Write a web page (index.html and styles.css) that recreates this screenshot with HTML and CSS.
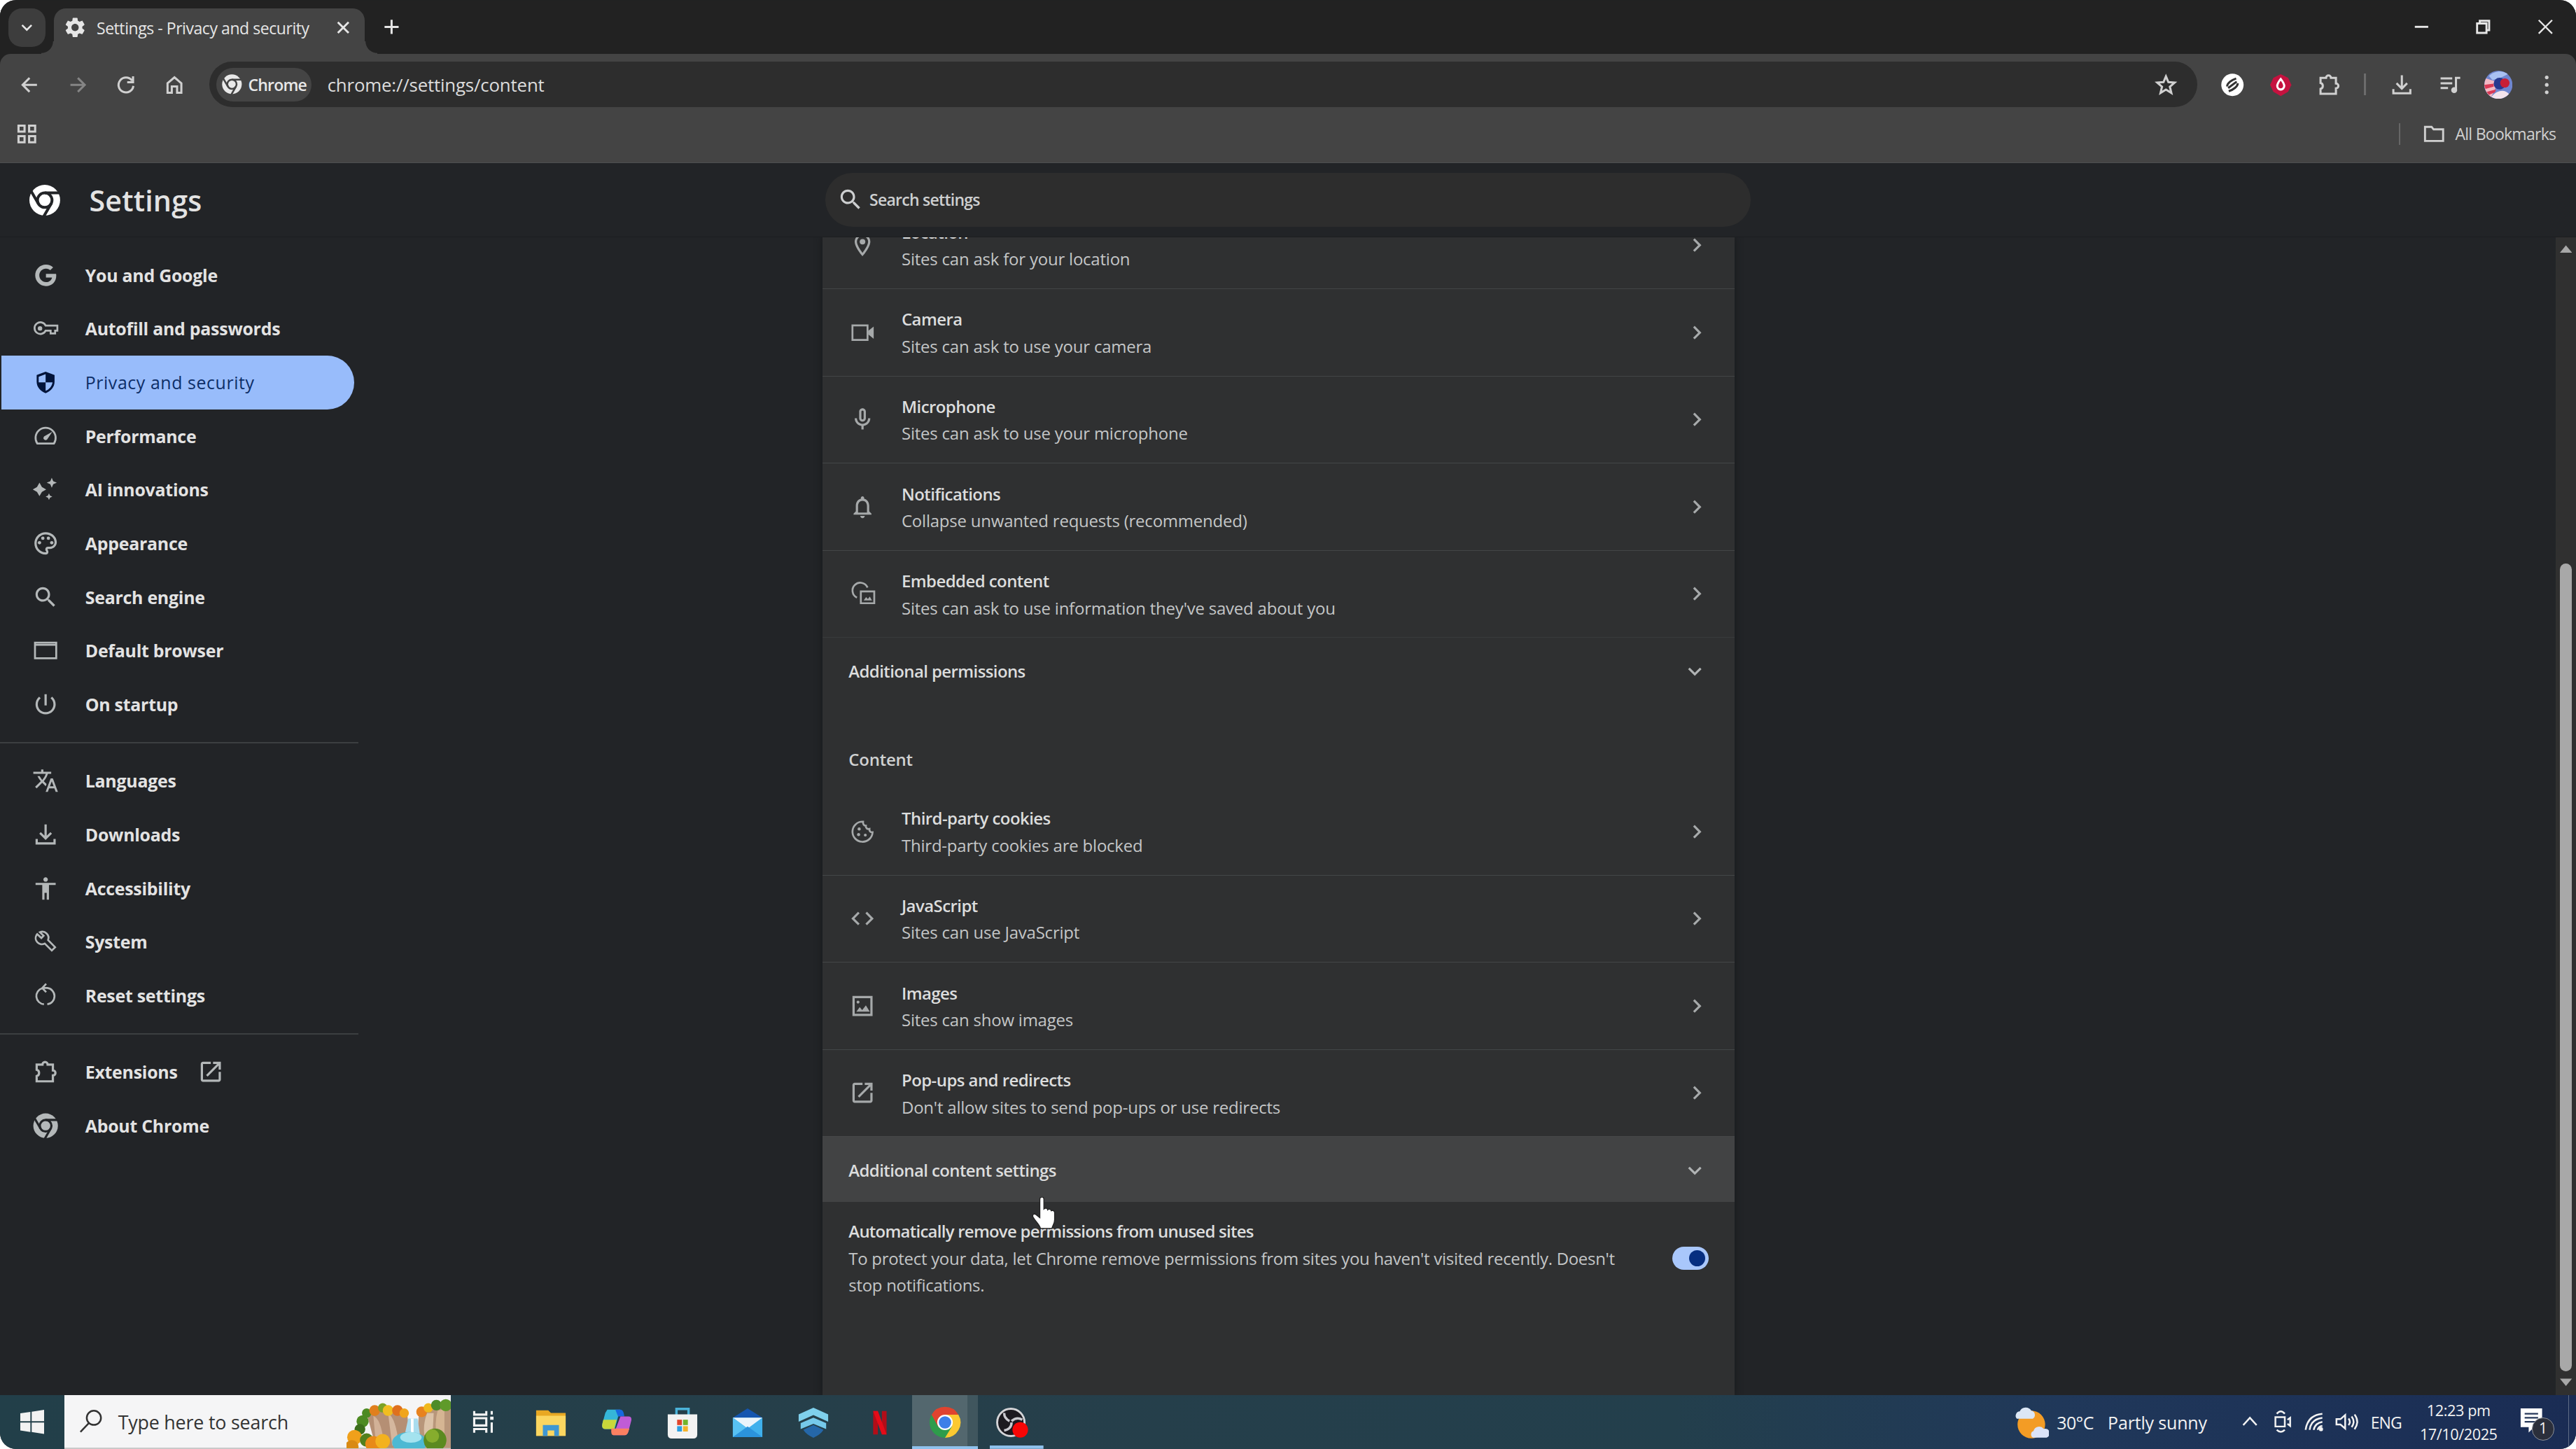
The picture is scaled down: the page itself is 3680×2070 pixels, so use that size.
FILE: index.html
```html
<!DOCTYPE html>
<html lang="en">
<head>
<meta charset="utf-8">
<title>Settings - Privacy and security</title>
<link rel="stylesheet" href="styles.css">
</head>
<body>
<!-- shared icon shapes -->
<svg class="sprite">
	<symbol id="right" viewBox="0 0 24 24"><path d="M10 6L8.590 7.410 13.170 12l-4.580 4.590L10 18l6-6z"/></symbol>
	<symbol id="down" viewBox="0 0 24 24"><path d="M16.590 8.590L12 13.170 7.410 8.590 6 10l6 6 6-6z"/></symbol>
	<symbol id="search" viewBox="0 0 24 24"><path d="M15.500 14h-.79l-.28-.27C15.410 12.590 16 11.110 16 9.500 16 5.910 13.090 3 9.500 3S3 5.910 3 9.500 5.910 16 9.500 16c1.610 0 3.090-.59 4.230-1.570l.27.28v.79l5 4.990L20.490 19l-4.990-5zm-6 0C7.010 14 5 11.990 5 9.500S7.010 5 9.500 5 14 7.010 14 9.500 11.990 14 9.500 14z"/></symbol>
	<symbol id="puzzle" viewBox="0 0 24 24"><path d="M4 5.500h5.200a2 2 0 0 1 4.600 0H18.500v5.200a2 2 0 0 1 0 4.600V20.500H4V15.800a2.900 2.900 0 0 0 0-5.600z" class="line"/></symbol>
	<symbol id="launch" viewBox="0 0 24 24"><path d="M19 19H5V5h7V3H5c-1.110 0-2 .9-2 2v14c0 1.100.89 2 2 2h14c1.100 0 2-.9 2-2v-7h-2v7zM14 3v2h3.590l-9.830 9.830 1.410 1.410L19 6.410V10h2V3h-7z"/></symbol>
	<symbol id="download" viewBox="0 0 24 24"><path d="M12 3v12M7 10.500l5 5 5-5M4 16v4h16v-4" class="line"/></symbol>
	<symbol id="chrome" viewBox="0 0 24 24"><circle cx="12" cy="12" r="11"/><g class="cut"><circle cx="12" cy="12" r="5.200"/><path d="M12 6.800h10.500M16.500 14.600L11.300 23.600M7.500 14.600L2.300 5.600"/></g></symbol>
	<symbol id="image" viewBox="0 0 24 24"><path d="M4 4h16v16H4z" class="line"/><path d="M6.500 17l3-4 2.200 2.600L15 11.500l3.500 5.500z"/><circle cx="8" cy="8.500" r="1.300"/></symbol>
</svg>

<div class="window">
	<div class="tabstrip">
		<div class="tabsearch"><svg class="i16"><use href="#down"/></svg></div>
		<div class="tab">
			<svg class="i18" viewBox="0 0 24 24"><path d="M19.140 12.940c.04-.3.06-.61.06-.94 0-.32-.02-.64-.07-.94l2.030-1.580c.18-.14.23-.41.12-.61l-1.920-3.320c-.12-.22-.37-.29-.59-.22l-2.390.96c-.5-.38-1.030-.7-1.620-.94l-.36-2.540c-.04-.24-.24-.41-.48-.41h-3.840c-.24 0-.43.17-.47.41l-.36 2.540c-.59.24-1.130.57-1.620.94l-2.390-.96c-.22-.08-.47 0-.59.22L2.740 8.870c-.12.21-.08.47.12.61l2.030 1.580c-.05.3-.09.63-.09.94s.02.64.07.94l-2.030 1.580c-.18.14-.23.41-.12.61l1.920 3.320c.12.22.37.29.59.22l2.390-.96c.5.38 1.030.7 1.620.94l.36 2.540c.05.24.24.41.48.41h3.840c.24 0 .44-.17.47-.41l.36-2.540c.59-.24 1.130-.56 1.620-.94l2.390.96c.22.08.47 0 .59-.22l1.920-3.320c.12-.22.07-.47-.12-.61l-2.010-1.580zM12 15.600c-1.980 0-3.600-1.620-3.600-3.600s1.620-3.600 3.600-3.600 3.600 1.620 3.600 3.600-1.620 3.600-3.600 3.600z"/></svg>
			<span class="tabtitle">Settings - Privacy and security</span>
			<svg class="i16" viewBox="0 0 16 16"><path d="M4 4l8 8M12 4l-8 8" class="line"/></svg>
		</div>
		<svg class="newtab" viewBox="0 0 16 16"><path d="M8 2v12M2 8h12" class="line"/></svg>
		<div class="winbtns">
			<svg viewBox="0 0 16 16"><path d="M3 8h10" class="line"/></svg>
			<svg viewBox="0 0 16 16"><path d="M3.500 5.500h7v7h-7zM5.500 5.500v-2h7v7h-2" class="line"/></svg>
			<svg viewBox="0 0 16 16"><path d="M3 3l10 10M13 3L3 13" class="line thin"/></svg>
		</div>
	</div>

	<div class="chromebar">
		<div class="toolbar">
			<span class="btn"><svg viewBox="0 0 24 24"><path d="M19 12H6M12 5.500L5.500 12l6.500 6.500" class="line"/></svg></span>
			<span class="btn off"><svg viewBox="0 0 24 24"><path d="M5 12h13M12 5.500l6.500 6.500-6.500 6.500" class="line"/></svg></span>
			<span class="btn"><svg viewBox="0 0 24 24"><path d="M17.500 8A7 7 0 1 0 18.800 13M18.500 4v5.500H13" class="line"/></svg></span>
			<span class="btn"><svg viewBox="0 0 24 24"><path d="M5.500 10.500L12 5l6.500 5.500v9H14.500v-6h-5v6h-4z" class="line"/></svg></span>
			<div class="omnibox">
				<div class="chip"><svg class="i16"><use href="#chrome"/></svg>Chrome</div>
				<span class="url">chrome://settings/content</span>
				<svg class="star" viewBox="0 0 24 24"><path d="M12 4l2.300 5.400 5.900.5-4.500 3.900 1.400 5.800-5.100-3.100-5.100 3.100 1.400-5.800-4.500-3.900 5.900-.5z" class="line"/></svg>
			</div>
			<span class="btn"><svg viewBox="0 0 24 24"><circle cx="12" cy="12" r="10.500" fill="#fff"/><path d="M7 13.500c0-3 4-6 8.500-7.500M17 10.500c0 3-4 6-8.500 7.500M8 15l8-6" stroke="#333" stroke-width="2" fill="none"/></svg></span>
			<span class="btn"><svg viewBox="0 0 24 24"><path d="M12 2l7 3.500 3 6.500-3 6.500-7 4-7-4L2 12l3-6.500z" fill="#c5123f"/><path d="M12 6.500c2 2.500 3.300 4.500 3.300 6.600a3.300 3.300 0 0 1-6.600 0c0-2.100 1.300-4.100 3.300-6.600z" fill="none" stroke="#fff" stroke-width="2"/></svg></span>
			<span class="btn"><svg><use href="#puzzle"/></svg></span>
			<span class="bar"></span>
			<span class="btn"><svg><use href="#download"/></svg></span>
			<span class="btn"><svg viewBox="0 0 24 24"><path d="M3 6h11M3 10.500h11M3 15h7M17.500 17V5.500h4" class="line"/><circle cx="15.800" cy="17" r="2.800"/></svg></span>
			<span class="btn"><svg class="avatar" viewBox="0 0 24 24"><circle cx="12" cy="12" r="12" fill="#6f86d0"/><path d="M1.500 6.500A12 12 0 0 0 6 22.400L10 14 9 9z" fill="#f2b9c4"/><path d="M0 12l8-1v2.500l-7 2zM2 18l8-2-1 2.500-5 2z" fill="#d93a55"/><path d="M4 4.500A12 12 0 0 1 20 3l-6 3-7 2z" fill="#a9c1f2"/><circle cx="13" cy="11" r="5" fill="#27398f"/><circle cx="17.500" cy="10.500" r="4" fill="#c81f36"/><path d="M6 22.400a12 12 0 0 0 15-2.500c-3-4-10-4-15 2.500z" fill="#f3e3ec"/></svg></span>
			<span class="btn"><svg viewBox="0 0 24 24"><circle cx="12" cy="5" r="1.700"/><circle cx="12" cy="12" r="1.700"/><circle cx="12" cy="19" r="1.700"/></svg></span>
		</div>
		<div class="bookmarks">
			<svg class="apps" viewBox="0 0 16 16"><path d="M1.800 1.800h4.500v4.500H1.800zM9.700 1.800h4.500v4.500H9.700zM1.800 9.700h4.500v4.500H1.800zM9.700 9.700h4.500v4.500H9.700z" class="line"/></svg>
			<span class="allbm"><svg class="i18" viewBox="0 0 24 24"><path d="M3 5h6.500l2 2.500H21V19H3z" class="line"/></svg>All Bookmarks</span>
		</div>
	</div>

	<div class="header">
		<svg class="logo"><use href="#chrome"/></svg>
		<h1>Settings</h1>
		<div class="searchbox"><svg class="i20"><use href="#search"/></svg>Search settings</div>
	</div>

	<div class="main">
		<ul class="nav">
			<li><svg viewBox="0 0 24 24"><path d="M12.240 10.285V14.400h6.806c-.275 1.765-2.056 5.174-6.806 5.174-4.095 0-7.439-3.389-7.439-7.574s3.345-7.574 7.439-7.574c2.330 0 3.891.989 4.785 1.849l3.254-3.138C18.189 1.186 15.479 0 12.240 0c-6.635 0-12 5.365-12 12s5.365 12 12 12c6.926 0 11.520-4.869 11.520-11.726 0-.788-.085-1.390-.189-1.989H12.240z" transform="translate(2.500 2.500) scale(.8)"/></svg>You and Google</li>
			<li><svg viewBox="0 0 24 24"><path d="M12 9.500h10.500v4.500h-2v2.500h-4V14H12a5.200 5.200 0 1 1 0-4.500z" class="line"/><circle cx="7" cy="12" r="2"/></svg>Autofill and passwords</li>
			<li class="on"><svg viewBox="0 0 24 24"><path d="M12 2.500L4 5.500v6c0 4.700 3.400 8.700 8 10.200 4.600-1.500 8-5.500 8-10.200v-6zM12 4.700V12h6.200c-.6 3.500-2.900 6.300-6.200 7.600V12H5.800V7z" fill-rule="evenodd"/></svg>Privacy and security</li>
			<li><svg viewBox="0 0 24 24"><path d="M4.500 18.500a9 9 0 1 1 15 0z" class="line"/><path d="M10.600 14.800a2 2 0 0 0 2.800 0L18 8l-7.400 4.200a2 2 0 0 0 0 2.600z"/></svg>Performance</li>
			<li><svg viewBox="0 0 24 24"><path d="M6.500 6l2.200 3.800L12.500 12l-3.800 2.200L6.500 18l-2.200-3.800L.5 12l3.800-2.200zM17.500 1.500l1.300 3.200L22 6l-3.200 1.300-1.300 3.200-1.300-3.200L13 6l3.200-1.300zM15 15.500l.9 2.100 2.100.9-2.100.9-.9 2.100-.9-2.100-2.100-.9 2.100-.9z"/></svg>AI innovations</li>
			<li><svg viewBox="0 0 24 24"><path d="M12 22C6.490 22 2 17.510 2 12S6.490 2 12 2s10 4.040 10 9c0 3.310-2.690 6-6 6h-1.770c-.28 0-.5.22-.5.5 0 .12.05.23.13.33.41.47.64 1.060.64 1.670A2.500 2.500 0 0 1 12 22zm0-18c-4.410 0-8 3.590-8 8s3.590 8 8 8c.28 0 .5-.22.5-.5a.54.54 0 0 0-.14-.35c-.41-.46-.63-1.050-.63-1.650a2.500 2.500 0 0 1 2.500-2.500H16c2.210 0 4-1.790 4-4 0-3.860-3.590-7-8-7z"/><circle cx="6.500" cy="11.500" r="1.500"/><circle cx="9.500" cy="7.500" r="1.500"/><circle cx="14.500" cy="7.500" r="1.500"/><circle cx="17.500" cy="11.500" r="1.500"/></svg>Appearance</li>
			<li><svg><use href="#search"/></svg>Search engine</li>
			<li><svg viewBox="0 0 24 24"><path d="M2.500 5h19v14h-19zM2.500 7h19" class="line"/></svg>Default browser</li>
			<li><svg viewBox="0 0 24 24"><path d="M13 3h-2v10h2V3zm4.830 2.170l-1.420 1.420C17.990 7.860 19 9.810 19 12c0 3.870-3.130 7-7 7s-7-3.130-7-7c0-2.190 1.010-4.140 2.580-5.420L6.170 5.170C4.230 6.820 3 9.260 3 12c0 4.970 4.030 9 9 9s9-4.030 9-9c0-2.740-1.230-5.180-3.170-6.830z"/></svg>On startup</li>
			<li class="sep"></li>
			<li><svg viewBox="0 0 24 24"><path d="M12.870 15.070l-2.540-2.510.03-.03c1.740-1.940 2.980-4.170 3.710-6.530H17V4h-7V2H8v2H1v1.990h11.170C11.500 7.920 10.440 9.750 9 11.350 8.070 10.320 7.300 9.190 6.690 8h-2c.73 1.630 1.730 3.170 2.980 4.560l-5.090 5.020L4 19l5-5 3.110 3.110.76-2.040zM18.500 10h-2L12 22h2l1.120-3h4.750L21 22h2l-4.500-12zm-2.620 7l1.620-4.330L19.120 17h-3.240z"/></svg>Languages</li>
			<li><svg><use href="#download"/></svg>Downloads</li>
			<li><svg viewBox="0 0 24 24"><path d="M12 2c1.100 0 2 .9 2 2s-.9 2-2 2-2-.9-2-2 .9-2 2-2zm9 7h-6v13h-2v-6h-2v6H9V9H3V7h18v2z"/></svg>Accessibility</li>
			<li><svg viewBox="0 0 24 24"><path d="M4.500 5.300l3.700 3.500 2-2L6.900 3.600a5.500 5.500 0 0 1 7.300 7l6.300 6.400-3 3-6.300-6.300A5.500 5.500 0 0 1 3.900 6z" class="line"/></svg>System</li>
			<li><svg viewBox="0 0 24 24"><path d="M9 5.500a7.300 7.300 0 0 0 1.500 14.300M13.500 19.800a7.300 7.300 0 0 0 0-14.500H10M12.500 1.500L9 5.300 12.500 9" class="line"/></svg>Reset settings</li>
			<li class="sep"></li>
			<li><svg><use href="#puzzle"/></svg>Extensions<svg class="ext"><use href="#launch"/></svg></li>
			<li><svg><use href="#chrome"/></svg>About Chrome</li>
		</ul>

		<div class="card">
			<div class="row first">
				<svg viewBox="0 0 24 24"><path d="M12 2C8.130 2 5 5.130 5 9c0 5.250 7 13 7 13s7-7.750 7-13c0-3.870-3.130-7-7-7zM7 9c0-2.760 2.240-5 5-5s5 2.240 5 5c0 2.880-2.880 7.190-5 9.880C9.920 16.210 7 11.850 7 9z"/><circle cx="12" cy="9" r="2.500"/></svg>
				<div class="txt"><b>Location</b>Sites can ask for your location</div><svg><use href="#right"/></svg>
			</div>
			<div class="row">
				<svg viewBox="0 0 24 24"><path d="M3 5.500h13.500v13H3z" class="line"/><path d="M17 10.500l5-4v11l-5-4z"/></svg>
				<div class="txt"><b>Camera</b>Sites can ask to use your camera</div><svg><use href="#right"/></svg>
			</div>
			<div class="row">
				<svg viewBox="0 0 24 24"><path d="M12 14c1.660 0 3-1.340 3-3V5c0-1.660-1.340-3-3-3S9 3.340 9 5v6c0 1.660 1.340 3 3 3zm-1-9c0-.55.45-1 1-1s1 .45 1 1v6c0 .55-.45 1-1 1s-1-.45-1-1V5zm6 6c0 2.760-2.240 5-5 5s-5-2.240-5-5H5c0 3.530 2.610 6.430 6 6.920V21h2v-3.080c3.390-.49 6-3.390 6-6.920h-2z"/></svg>
				<div class="txt"><b>Microphone</b>Sites can ask to use your microphone</div><svg><use href="#right"/></svg>
			</div>
			<div class="row">
				<svg viewBox="0 0 24 24"><path d="M12 22c1.100 0 2-.9 2-2h-4c0 1.100.9 2 2 2zm6-6v-5c0-3.070-1.630-5.640-4.500-6.320V4c0-.83-.67-1.500-1.500-1.500s-1.500.67-1.500 1.500v.68C7.640 5.360 6 7.920 6 11v5l-2 2v1h16v-1l-2-2zm-2 1H8v-6c0-2.480 1.510-4.500 4-4.500s4 2.020 4 4.500v6z"/></svg>
				<div class="txt"><b>Notifications</b>Collapse unwanted requests (recommended)</div><svg><use href="#right"/></svg>
			</div>
			<div class="row">
				<svg viewBox="0 0 24 24"><path d="M7 15.500A7 7 0 1 1 16.500 6.500M10.500 10h12v10.500h-12z" class="line"/><path d="M13 18l2.200-3 1.600 1.800 1.700-2.300 2 3.500z"/></svg>
				<div class="txt"><b>Embedded content</b>Sites can ask to use information they've saved about you</div><svg><use href="#right"/></svg>
			</div>
			<div class="more">Additional permissions<svg><use href="#down"/></svg></div>
			<h2>Content</h2>
			<div class="row">
				<svg viewBox="0 0 24 24"><path d="M12.500 3a9 9 0 1 0 8.500 9.500c-2 .2-3-1.200-2.800-3-2 .4-3.500-.8-3.200-2.800-1.800 0-2.800-1.500-2.500-3.700z" class="line"/><circle cx="9" cy="9.500" r="1.400"/><circle cx="8.500" cy="14.500" r="1.400"/><circle cx="14.500" cy="15" r="1.300"/></svg>
				<div class="txt"><b>Third-party cookies</b>Third-party cookies are blocked</div><svg><use href="#right"/></svg>
			</div>
			<div class="row">
				<svg viewBox="0 0 24 24"><path d="M9.400 16.600L4.800 12l4.600-4.600L8 6l-6 6 6 6 1.400-1.400zm5.200 0l4.600-4.600-4.600-4.600L16 6l6 6-6 6-1.400-1.400z"/></svg>
				<div class="txt"><b>JavaScript</b>Sites can use JavaScript</div><svg><use href="#right"/></svg>
			</div>
			<div class="row">
				<svg><use href="#image"/></svg>
				<div class="txt"><b>Images</b>Sites can show images</div><svg><use href="#right"/></svg>
			</div>
			<div class="row">
				<svg><use href="#launch"/></svg>
				<div class="txt"><b>Pop-ups and redirects</b>Don't allow sites to send pop-ups or use redirects</div><svg><use href="#right"/></svg>
			</div>
			<div class="more hover">Additional content settings<svg><use href="#down"/></svg></div>
			<div class="auto">
				<div class="txt"><b>Automatically remove permissions from unused sites</b>To protect your data, let Chrome remove permissions from sites you haven't visited recently. Doesn't stop notifications.</div>
				<span class="toggle"></span>
			</div>
		</div>

		<div class="scroll">
			<svg viewBox="0 0 10 6"><path d="M0 6l5-6 5 6z"/></svg>
			<div class="thumb"></div>
			<svg viewBox="0 0 10 6"><path d="M0 0l5 6 5-6z"/></svg>
		</div>
	</div>

	<div class="taskbar">
		<div class="start"><svg viewBox="0 0 18 18"><path d="M0 2.600L7.500 1.500v7H0zM8.500 1.400L18 0v8.500H8.500zM0 9.500h7.500v7L0 15.400zM8.500 9.500H18V18l-9.500-1.400z"/></svg></div>
		<div class="wsearch">
			<svg class="mag" viewBox="0 0 18 18"><circle cx="11" cy="6.500" r="5.300" class="line"/><path d="M7.200 10.500L1 17" class="line"/></svg>
			<span>Type here to search</span>
			<svg class="art" viewBox="0 0 78 40">
				<path d="M15 14q12-6 30-2l3 28H22z" fill="#b58f74"/><path d="M20 16q6 2 8 22h-6z" fill="#d2b197"/><path d="M31 14q6 4 8 24h-5z" fill="#d5b79e"/><path d="M54 14q10-6 24-4v30H52z" fill="#b8967a"/><path d="M60 14q-3 8-2 16l6 3 1-19z" fill="#dcc3a8"/><path d="M68 12q-3 10 0 24l5-2V11z" fill="#d5b593"/>
				<path d="M46 18h7l2 14H43z" fill="#a9dcee"/><path d="M49 18v14" stroke="#fff" stroke-width="2"/>
				<circle cx="12" cy="20" r="4.500" fill="#4d8a22"/><circle cx="10" cy="26" r="4" fill="#3c6e1c"/><circle cx="15" cy="14" r="3.500" fill="#4d8a22"/><circle cx="21" cy="12" r="4" fill="#e07f1d"/><circle cx="27" cy="10" r="3.500" fill="#7ba226"/><circle cx="31" cy="12" r="4" fill="#f1bd20"/><circle cx="38" cy="12" r="4" fill="#df701d"/><circle cx="43" cy="14" r="3.500" fill="#f0a51c"/>
				<circle cx="56" cy="13" r="4" fill="#e8821e"/><circle cx="61" cy="10" r="3.500" fill="#f0b91e"/><circle cx="67" cy="8" r="4" fill="#4e8c28"/><circle cx="74" cy="8" r="4.500" fill="#5f9a2a"/>
				<ellipse cx="47" cy="36" rx="13" ry="8" fill="#4db9d3"/><ellipse cx="48" cy="32" rx="8" ry="4" fill="#a4e3ef"/>
				<circle cx="66" cy="34" r="8.500" fill="#5b8a20"/><circle cx="64" cy="31" r="5" fill="#86ad2d"/>
				<circle cx="6" cy="32" r="5.500" fill="#f0a01b"/><circle cx="4" cy="39" r="5" fill="#d98a14"/><circle cx="15" cy="34" r="5" fill="#52801e"/><circle cx="20" cy="37" r="6" fill="#e88a18"/><circle cx="27" cy="35" r="5.500" fill="#f3b21f"/>
			</svg>
		</div>
		<div class="task"><svg viewBox="0 0 20 20" fill="none" stroke="#f4f4f4" stroke-width="1.800"><path d="M2 1v3h10V1M2 7h10v6H2zM2 19v-3h10v3M16.500 1v3M16.500 10.500V19" fill="none"/><path d="M15.200 7h2.800" stroke-width="2.600"/></svg></div>
		<div class="task"><svg viewBox="0 0 24 24"><path d="M1 3h9l2 2h11v17H1z" fill="#e8a823"/><path d="M1 7h22v15H1z" fill="#fbd660"/><path d="M6 22v-8h12v8h-3.500v-4h-5v4z" fill="#3f97d3"/></svg></div>
		<div class="task"><svg viewBox="0 0 24 24"><path d="M5 2.500h9.500l-4 14.500H3.500q-3 0-2.200-4L3.500 5z" fill="#35b6d8"/><path d="M2 10h10l-2 7H3.500q-3 0-2.200-4z" fill="#c9d83a"/><path d="M11 2.500h3.500q2.300 0 2.800 3l.4 2H13z" fill="#1868e0"/><path d="M9.500 21.500H18q2 0 2.800-3l2-7.500q.8-3.500-2-3.500h-6z" fill="#c05cd6"/><path d="M8 16.500h13.400l-.6 2Q20 21.500 18 21.500H9.500q-2 0-1.500-5z" fill="#fb8061"/></svg></div>
		<div class="task"><svg viewBox="0 0 24 24"><path d="M7.500 7V2h9v5" fill="none" stroke="#4bb3d9" stroke-width="1.800"/><path d="M1 6h22v15q0 3-3 3H4q-3 0-3-3z" fill="#f3f3f3"/><path d="M8 10h3.600v4H8z" fill="#e0452b"/><path d="M12.400 10H16v4h-3.600z" fill="#73b42b"/><path d="M8 14.800h3.600v4H8z" fill="#2c9fe0"/><path d="M12.400 14.800H16v4h-3.600z" fill="#f5b32a"/></svg></div>
		<div class="task"><svg viewBox="0 0 24 24"><path d="M1 8.500l11-7 11 7z" fill="#1456b0"/><path d="M1 8.500h22V23H1z" fill="#3fb0ec"/><path d="M1 8.500h22l-11 8z" fill="#eaf4fb"/><path d="M1 8.500l11 8L1 23z" fill="#58c1f3"/><path d="M1 23l11-8 11 8z" fill="#2b93dc"/></svg></div>
		<div class="task"><svg viewBox="0 0 24 24"><path d="M12 1l11 5v5.500l-11-5-11 5V6z" fill="#7fd0ec"/><path d="M12 8.500l9.500 4v4.500l-9.500-4-9.500 4v-4.500z" fill="#76c9ea"/><path d="M4.500 17.500l7.500-3.500 7.500 3.500q-2 3.500-7.500 6-5.500-2.500-7.500-6z" fill="#2567a8"/></svg></div>
		<div class="task"><svg viewBox="0 0 24 24"><path d="M7.500 3.500H11V21H7.500zM14 3.500h3.500V21H14z" fill="#b30d18"/><path d="M7.500 3.500H11L17.500 21H14z" fill="#e50b18"/></svg></div>
		<div class="task active"><svg viewBox="0 0 24 24"><circle cx="12" cy="12" r="11.500" fill="#2e9c4b"/><path d="M2 6.200A11.500 11.500 0 0 1 22 6.200H12L6.800 15z" fill="#e0432f"/><path d="M22 6.200a11.500 11.500 0 0 1-10 17.300L17.200 15 12 6.200z" fill="#fcc931"/><circle cx="12" cy="12" r="5.800" fill="#fff"/><circle cx="12" cy="12" r="4.600" fill="#3d7fe8"/></svg></div>
		<div class="task run"><svg viewBox="0 0 24 24"><circle cx="11" cy="12" r="10.200" fill="#1c1a20" stroke="#d5d5d8" stroke-width="1.500"/><path d="M10 11q-4-2-4-6M11.500 12q0 5-5.500 6M11.500 11q4-3.500 8-1" stroke="#c9c9cf" stroke-width="1.800" fill="none"/><circle cx="18" cy="17.500" r="5.800" fill="#f80606"/></svg></div>

		<div class="tray">
			<svg class="weather" viewBox="0 0 24 24"><circle cx="12" cy="13.500" r="9.500" fill="#f39c25"/><path d="M2 9.500a3 3 0 0 1 2-5 4.500 4.500 0 0 1 8-.5 3 3 0 0 1 1 5.500z" fill="#dce7f5"/><path d="M13 22.500a2.500 2.500 0 0 1 .5-4.500 4 4 0 0 1 7-1.500 3 3 0 0 1 2 6z" fill="#dbe3f7"/></svg>
			<span class="temp">30°C</span><span class="cond">Partly sunny</span>
			<svg viewBox="0 0 20 20"><path d="M5 12.500l5-5.500 5 5.500" class="line"/></svg>
			<svg viewBox="0 0 20 20"><path d="M5 6.500h7v7H5zM14 8.500l2-1.500v6l-2-1.500M6 4q3-3.500 6 0M6 16q3 3 6 0" class="line"/></svg>
			<svg viewBox="0 0 20 20"><path d="M3.500 16Q5 5 16 4M6.500 16q1-8 9.500-9M9.500 16q1-5 6.500-6M12.500 16q.5-2.500 3.500-3" class="line"/><circle cx="15" cy="15.500" r="1.500"/></svg>
			<svg viewBox="0 0 20 20"><path d="M2.500 8h3L9 5v10l-3.500-3h-3zM11.500 7.500q2 2.500 0 5M13.800 6q3 4 0 8M16 4.500q4 5.500 0 11" class="line"/></svg>
			<span class="eng">ENG</span>
			<span class="clock">12:23 pm<br>17/10/2025</span>
			<span class="notif"><svg viewBox="0 0 18 20"><path d="M1 1h16v14h-6l-4 4v-4H1z" fill="#fff"/><path d="M4 5h10M4 8h10M4 11h10" stroke="#26385a" stroke-width="1.200"/></svg><i>1</i></span>
		</div>
	</div>

	<svg class="hand" viewBox="0 0 18 24"><path d="M6 1.500c0-2 3-2 3 0V9c1-1 2.700-.7 2.800.6 1-.9 2.500-.5 2.700.7 1.200-.6 2.500 0 2.500 1.500V17c0 3-1.500 4-2 6.500H6.500C6 21 3 18.500 1 15c-1-2 1-3 2.300-1.700L6 15.500z" fill="#fff" stroke="#222" stroke-width=".7"/></svg>
</div>
</body>
</html>
```
FILE: styles.css
```css
* {margin:0;padding:0;list-style:none;box-sizing:border-box;}
html {background:#fff;}
/* desktop is 1920x1080, drawn at the monitor's scale */
body {width:1920px;height:1080px;zoom:1.916667;overflow:hidden;font:12.5px/20px "Open Sans","Noto Sans",sans-serif;color:#e3e3e3;}
svg {fill:currentColor;flex:none;display:block;}
.sprite {position:absolute;width:0;height:0;}
.line {fill:none;stroke:currentColor;stroke-width:2;}
.cut {stroke:var(--bg,#222427);stroke-width:2;fill:none;}
.i16 {width:16px;height:16px;}
.i18 {width:18px;height:18px;}
.i20 {width:20px;height:20px;}
.window {position:relative;width:1920px;height:1080px;background:#222427;border-radius:12px;overflow:hidden;}

/* tabs */
.tabstrip {position:relative;z-index:1;display:flex;height:40px;color:#e6e6e6;}
.tabsearch {width:28px;height:29px;margin:6px 6px 0;border-radius:10px;background:#3d3d3d;display:flex;align-items:center;justify-content:center;}
.tab {position:relative;width:232px;height:34px;margin-top:6px;padding:0 8px 5px 7px;border-radius:9px 9px 0 0;background:#444;display:flex;align-items:center;}
.tab:before,.tab:after {content:"";position:absolute;bottom:0;width:9px;height:9px;}
.tab:before {left:-9px;background:radial-gradient(circle at 0 0,transparent 8.5px,#444 9px);}
.tab:after {right:-9px;background:radial-gradient(circle at 100% 0,transparent 8.5px,#444 9px);}
.tabtitle {flex:1;padding-left:7px;padding-top:1px;font-size:12px;font-weight:500;letter-spacing:-.23px;white-space:nowrap;}
.tab .line {stroke-width:1.5;}
.newtab {width:14px;height:14px;margin:13px 0 0 13px;}
.newtab .line {stroke-width:1.8;}
.winbtns {margin-left:auto;display:flex;align-items:center;gap:30px;padding-right:15px;}
.winbtns svg {width:16px;height:16px;}
.winbtns .line {stroke-width:1.5;}
.winbtns .thin {stroke-width:1.2;}

/* toolbar */
.chromebar {height:81.5px;background:#444;border-bottom:1px solid #4d4f50;border-radius:8px 8px 0 0;box-shadow:0 -40px 0 #222;color:#d0d0d0;}
.toolbar {display:flex;align-items:center;height:46px;padding-left:4px;}
.btn {width:36px;display:flex;justify-content:center;}
.btn svg {width:19px;height:19px;}
.btn .avatar {width:21px;height:21px;}
.off {color:#858585;}
.bar {width:18px;height:16px;background:linear-gradient(90deg,transparent 8px,#6c6c6c 8px,#6c6c6c 9.5px,transparent 9.5px);}
.omnibox {width:1482px;height:34px;margin:0 8px;padding:0 14px 0 5px;border-radius:17px;background:#2d2d2d;display:flex;align-items:center;}
.chip {--bg:#444;width:71px;height:25px;border-radius:13px;background:#444;padding-left:4px;display:flex;align-items:center;gap:4px;font-size:12px;font-weight:600;letter-spacing:-.42px;color:#e8e8e8;}
.url {flex:1;padding-left:12px;font-size:13.5px;letter-spacing:-.1px;color:#dcdcdc;}
.star {width:19px;height:19px;}
.bookmarks {display:flex;align-items:center;height:28px;padding:0 15px 0 12px;}
.apps {width:16px;height:16px;}
.apps .line {stroke-width:1.6;}
.allbm {margin-left:auto;display:flex;align-items:center;gap:7px;padding-left:16px;font-size:12px;letter-spacing:-.38px;height:16px;border-left:1.5px solid #666;}

/* settings header */
.header {display:flex;align-items:center;height:55.5px;padding-left:21px;border-bottom:1px solid #1c1e20;}
.logo {width:25px;height:25px;color:#fff;}
.header h1 {width:569px;padding:1px 0 0 20.5px;font-size:21.5px;font-weight:600;letter-spacing:.1px;color:#e3e3e3;}
.searchbox {width:690px;height:40px;border-radius:20px;background:#2d2d2d;padding-left:9px;display:flex;align-items:center;gap:4px;font-size:12px;font-weight:600;letter-spacing:-.38px;color:#cdcfd0;}

/* left menu */
.main {display:flex;height:863px;overflow:hidden;}
.nav {width:267px;padding-top:8px;font-size:13px;font-weight:700;letter-spacing:-.13px;}
.nav li {height:40px;padding-left:24px;display:flex;align-items:center;}
.nav svg {width:20px;height:20px;margin-right:19.5px;color:#b4b8b9;}
.nav .ext {margin:0 0 0 15px;}
.nav .line {stroke-width:1.7;}
.nav .on {width:263px;margin-left:1px;padding-left:23px;border-radius:0 20px 20px 0;background:#98bcfb;color:#0d2e68;font-weight:500;letter-spacing:.3px;}
.nav .on svg {color:#02143a;}
.nav .sep {height:1px;margin:8px 0;background:#3c3f41;}

/* permissions card */
.card {width:680px;margin-left:346px;background:#2f3031;box-shadow:0 0 5px #17191b;letter-spacing:-.1px;color:#c4c6c7;}
.row {height:65px;padding:0 18px 0 20px;display:flex;align-items:center;border-top:1px solid #434647;}
.row svg {width:20px;height:20px;color:#a6a9aa;}
.row.first {margin-top:-27px;}
.row .line {stroke-width:1.7;}
.row .txt {padding:1px 0 0 19px;}
.txt {flex:1;}
.txt b {display:block;font-weight:600;letter-spacing:-.28px;color:#dcdddd;}
.more {height:49px;padding:1px 20px 0 19.5px;border-top:1px solid #383a3b;display:flex;align-items:center;justify-content:space-between;font-weight:600;letter-spacing:-.3px;color:#dcdddd;}
.more svg {width:20px;height:20px;color:#b0b3b4;}
.hover {background:#424344;border-color:#464748;}
.card h2 {height:63px;padding:32px 20px 0 19.5px;font-size:12.5px;font-weight:600;color:#cfd1d1;}
.card h2 + .row {border-top-color:transparent;}
.auto {display:flex;align-items:center;padding:12px 19.5px;letter-spacing:-.14px;}
.auto .txt {padding-right:35px;}
.auto b {letter-spacing:-.38px;}
.toggle {width:27px;height:17px;padding:2.5px;border-radius:9px;background:#a9c7fb;display:flex;justify-content:flex-end;}
.toggle:after {content:"";width:12px;height:12px;border-radius:50%;background:#062e80;}

.scroll {width:15px;margin-left:auto;padding:5px 0 6px;background:#303030;color:#a8a8a8;display:flex;flex-direction:column;align-items:center;}
.scroll svg {width:9px;height:7px;}
.thumb {width:9px;height:602px;margin:auto 0 5px;border-radius:5px;background:#a8a8a8;}

/* taskbar */
.taskbar {height:40px;display:flex;background:linear-gradient(90deg,#223f49,#263f4a 35%,#233f4c 65%,#20385a 80%,#1a2c54);color:#f2f2f2;}
.start {width:48px;padding:11px 0 0 15px;}
.start svg {width:18px;height:18px;}
.wsearch {width:288px;background:#f5f5f6;color:#333;border-bottom:1.5px solid #c9c9c9;display:flex;align-items:center;font-size:14px;letter-spacing:-.1px;}
.wsearch span {flex:1;padding:2px 0 0 11px;}
.mag {width:18px;height:18px;margin-left:11px;}
.mag .line {stroke-width:1.3;}
.art {width:78px;height:40px;}
.task {width:49px;display:flex;align-items:center;justify-content:center;}
.task svg {width:24px;height:24px;}
.task:nth-child(3) {margin-right:1px;}
.task:nth-child(3) svg {width:18px;height:19px;}
.active {background:linear-gradient(90deg,#53676e 41px,#40565e 41px);border-bottom:2.5px solid #8fc1ec;}
.active svg {margin-top:2px;}
.run svg {margin-left:2px;}
.run {background:linear-gradient(#8fc1ec,#8fc1ec) 100% 100%/40px 2.5px no-repeat;}
.tray {margin:0 5px 0 auto;width:414px;display:flex;align-items:center;border-right:1px solid #5f6d86;}
.tray svg {width:20px;height:20px;margin-right:4px;}
.tray .line {stroke-width:1.3;}
.tray .weather {width:26px;height:26px;margin-right:6px;}
.tray span {padding-top:1px;}
.temp {width:38px;font-size:13px;letter-spacing:-.3px;}
.cond {width:96px;font-size:13px;letter-spacing:-.07px;}
.tray .eng {width:32px;padding-left:4px;font-size:12px;letter-spacing:-.45px;}
.tray .clock {width:75px;padding:0;text-align:center;font-size:11.3px;line-height:17.5px;letter-spacing:-.22px;}
.notif {position:relative;padding-left:8px;}
.tray .notif svg {width:18px;height:20px;margin:-4px 0 0;}
.notif i {position:absolute;left:17px;top:5px;width:17px;height:17px;border-radius:50%;border:1px solid #8b8f98;background:#2b2f3b;font:11px/15px "Open Sans",sans-serif;text-align:center;}

/* pointer over the page */
.hand {position:absolute;left:769px;top:892px;width:18px;height:24px;}
```
